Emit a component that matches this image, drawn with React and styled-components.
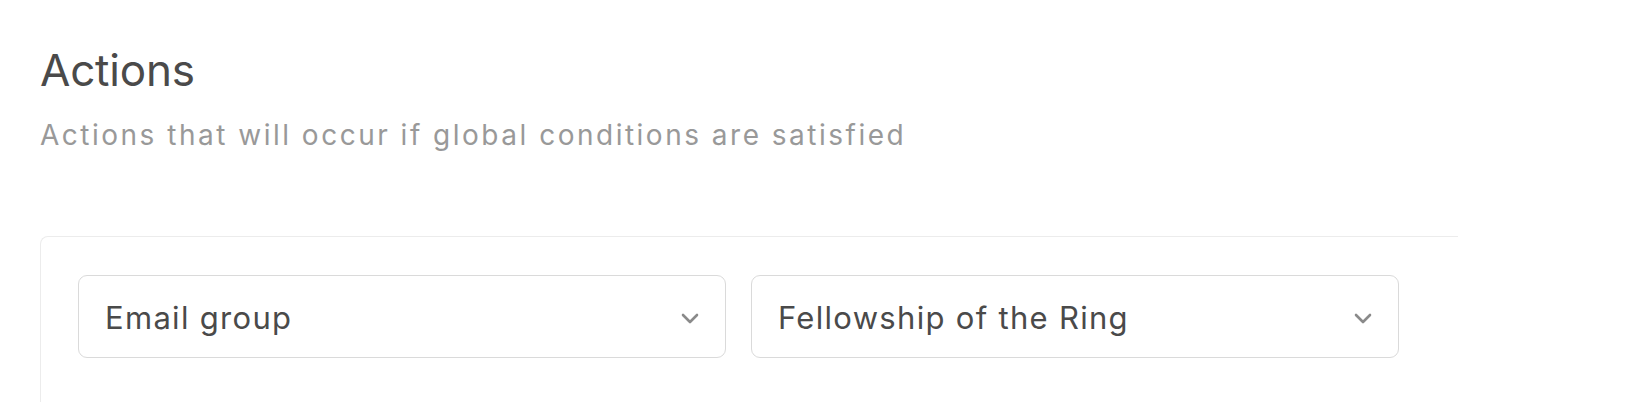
import React from 'react';
import styled, { createGlobalStyle } from 'styled-components';

const GlobalStyle = createGlobalStyle`
    html, body {
        margin: 0;
        padding: 0;
        background: #ffffff;
    }
    body {
        font-family: 'Inter', 'Helvetica Neue', Arial, sans-serif;
        -webkit-font-smoothing: antialiased;
    }
`

const Page = styled.div`
    padding: 44px 0 0 40px;
    height: 402px;
    box-sizing: border-box;
    overflow: hidden;
`

const Title = styled.h2`
    margin: 0;
    font-size: 44px;
    line-height: 53px;
    font-weight: 400;
    color: #4a4a4a;
    letter-spacing: -0.2px;
`

const Description = styled.p`
    margin: 22px 0 0 0;
    font-size: 28px;
    line-height: 32px;
    letter-spacing: 2.5px;
    color: #999999;
`

const Card = styled.div`
    margin-top: 85px;
    width: 1418px;
    box-sizing: border-box;
    border: 1px solid #ececec;
    border-right: none;
    border-bottom: none;
    border-radius: 8px 0 0 0;
    padding: 38px 0 60px 37px;
    display: flex;
    gap: 25px;
`

const Select = styled.div`
    width: 648px;
    height: 83px;
    box-sizing: border-box;
    border: 1px solid #dadada;
    border-radius: 9px;
    padding: 0 26px 0 26px;
    display: flex;
    align-items: center;
    justify-content: space-between;
    background: #fff;
`

const Value = styled.span`
    font-size: 31px;
    letter-spacing: 1.3px;
    color: #4a4a4a;
    padding-top: 2px;
`

const Chevron = styled.svg`
    width: 18px;
    height: 11px;
    margin-top: 4px;
    flex-shrink: 0;
`

function ChevronDown() {
    return (
        <Chevron viewBox="0 0 18 11">
            <path d="M2 2 L9 9 L16 2" fill="none" stroke="#8a8a8a" strokeWidth="2.6" strokeLinecap="round" strokeLinejoin="round"/>
        </Chevron>
    );
}

function Dropdown({ value }) {
    return (
        <Select>
            <Value>{value}</Value>
            <ChevronDown/>
        </Select>
    );
}

function App() {
    return (
        <Page>
            <GlobalStyle/>
            <Title>Actions</Title>
            <Description>Actions that will occur if global conditions are satisfied</Description>
            <Card>
                <Dropdown value="Email group"/>
                <Dropdown value="Fellowship of the Ring"/>
            </Card>
        </Page>
    );
}

export default App;
